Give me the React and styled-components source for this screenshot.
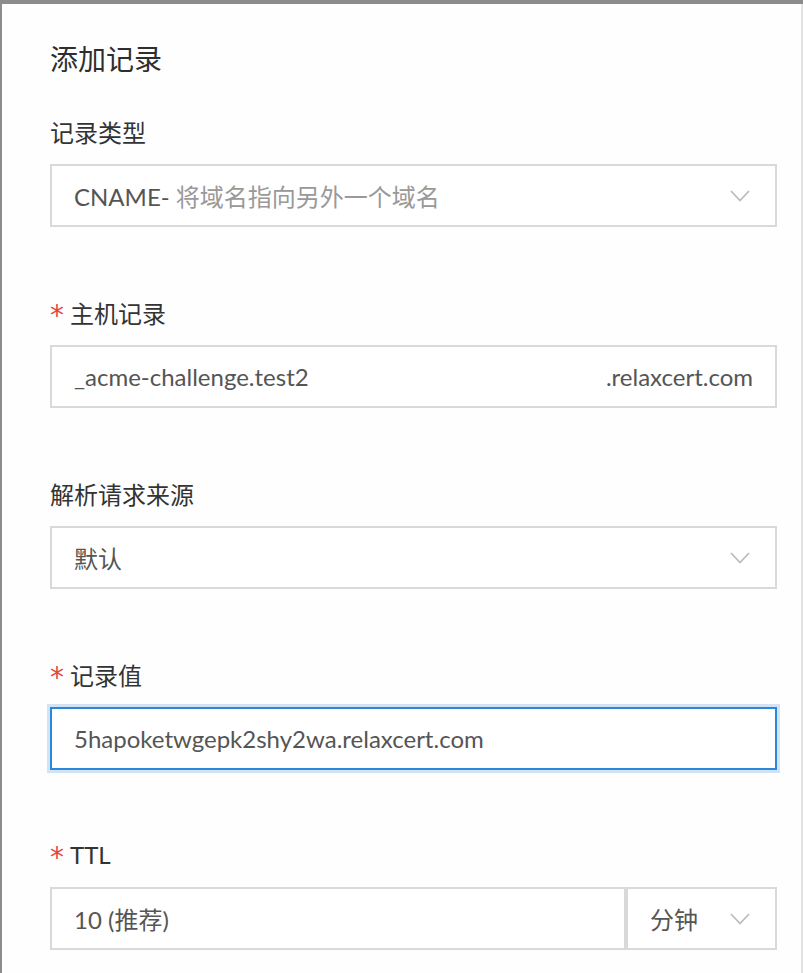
import React from "react";
import styled, { createGlobalStyle, css } from "styled-components";

const Global = createGlobalStyle`
  html, body { margin: 0; padding: 0; }
  body {
    background: #8c8c8c;
    font-family: "Lato", "Noto Sans CJK SC", sans-serif;
    overflow: hidden;
  }
`;

const Backdrop = styled.div`
  width: 803px;
  height: 973px;
  padding: 4px 0 0 2px;
  box-sizing: border-box;
  overflow: hidden;
`;

const Modal = styled.div`
  background: #fefefe;
  height: 100%;
  box-sizing: border-box;
  padding: 38px 24px 0 48px;
  border-right: 2px solid #e2e2e2;
  display: flex;
  flex-direction: column;
`;

const Title = styled.h2`
  margin: 0 0 41px;
  font-size: 28px;
  line-height: 32px;
  font-weight: 400;
  color: #2e2e2e;
  font-family: "Noto Sans CJK SC", sans-serif;
`;

const Field = styled.div`
  display: flex;
  flex-direction: column;
  margin-bottom: ${(p) => p.$gap ?? 69}px;
`;

const Label = styled.div`
  display: flex;
  align-items: center;
  height: 32px;
  margin-bottom: 17px;
  font-size: 24px;
  color: #333;
  font-family: "Lato", "Noto Sans CJK SC", sans-serif;
`;

const Star = styled.span`
  color: #e4463f;
  font-size: 28px;
  line-height: 1;
  width: 20px;
  font-family: "DejaVu Sans", sans-serif;
  margin-top: 8px;
`;

const Box = styled.div`
  height: 63px;
  box-sizing: border-box;
  border: 2px solid #d9d9d9;
  background: #fff;
  display: flex;
  align-items: center;
  padding: 0 22px;
  font-size: 24px;
  color: #555;
  ${(p) =>
    p.$focused &&
    css`
      border-color: #2b88d9;
      box-shadow: 0 0 0 3px #d3e3f6;
    `}
  ${(p) => p.$grow && css`flex: 1;`}
  ${(p) => p.$width && css`width: ${p.$width}px; flex: none;`}
`;

const Value = styled.span`
  flex: 1;
  white-space: nowrap;
`;

const Hint = styled.span`
  color: #999;
`;

const Suffix = styled.span`
  color: #555;
`;

const Row = styled.div`
  display: flex;
`;

const Chevron = () => (
  <svg width="20" height="12" viewBox="0 0 20 12" style={{ flex: "none", marginRight: 3 }}>
    <polyline points="1,1 10,10.5 19,1" fill="none" stroke="#bcbcbc" strokeWidth="1.8" />
  </svg>
);

export default function App() {
  return (
    <>
      <Global />
      <Backdrop>
        <Modal>
          <Title>添加记录</Title>

          <Field>
            <Label>记录类型</Label>
            <Box>
              <Value>
                CNAME-<Hint> 将域名指向另外一个域名</Hint>
              </Value>
              <Chevron />
            </Box>
          </Field>

          <Field>
            <Label>
              <Star>*</Star>主机记录
            </Label>
            <Box>
              <Value>_acme-challenge.test2</Value>
              <Suffix>.relaxcert.com</Suffix>
            </Box>
          </Field>

          <Field>
            <Label>解析请求来源</Label>
            <Box>
              <Value>默认</Value>
              <Chevron />
            </Box>
          </Field>

          <Field $gap={68}>
            <Label>
              <Star>*</Star>记录值
            </Label>
            <Box $focused>
              <Value>5hapoketwgepk2shy2wa.relaxcert.com</Value>
            </Box>
          </Field>

          <Field>
            <Label>
              <Star>*</Star>TTL
            </Label>
            <Row>
              <Box $grow>
                <Value>10 (推荐)</Value>
              </Box>
              <Box $width={151}>
                <Value>分钟</Value>
                <Chevron />
              </Box>
            </Row>
          </Field>
        </Modal>
      </Backdrop>
    </>
  );
}
